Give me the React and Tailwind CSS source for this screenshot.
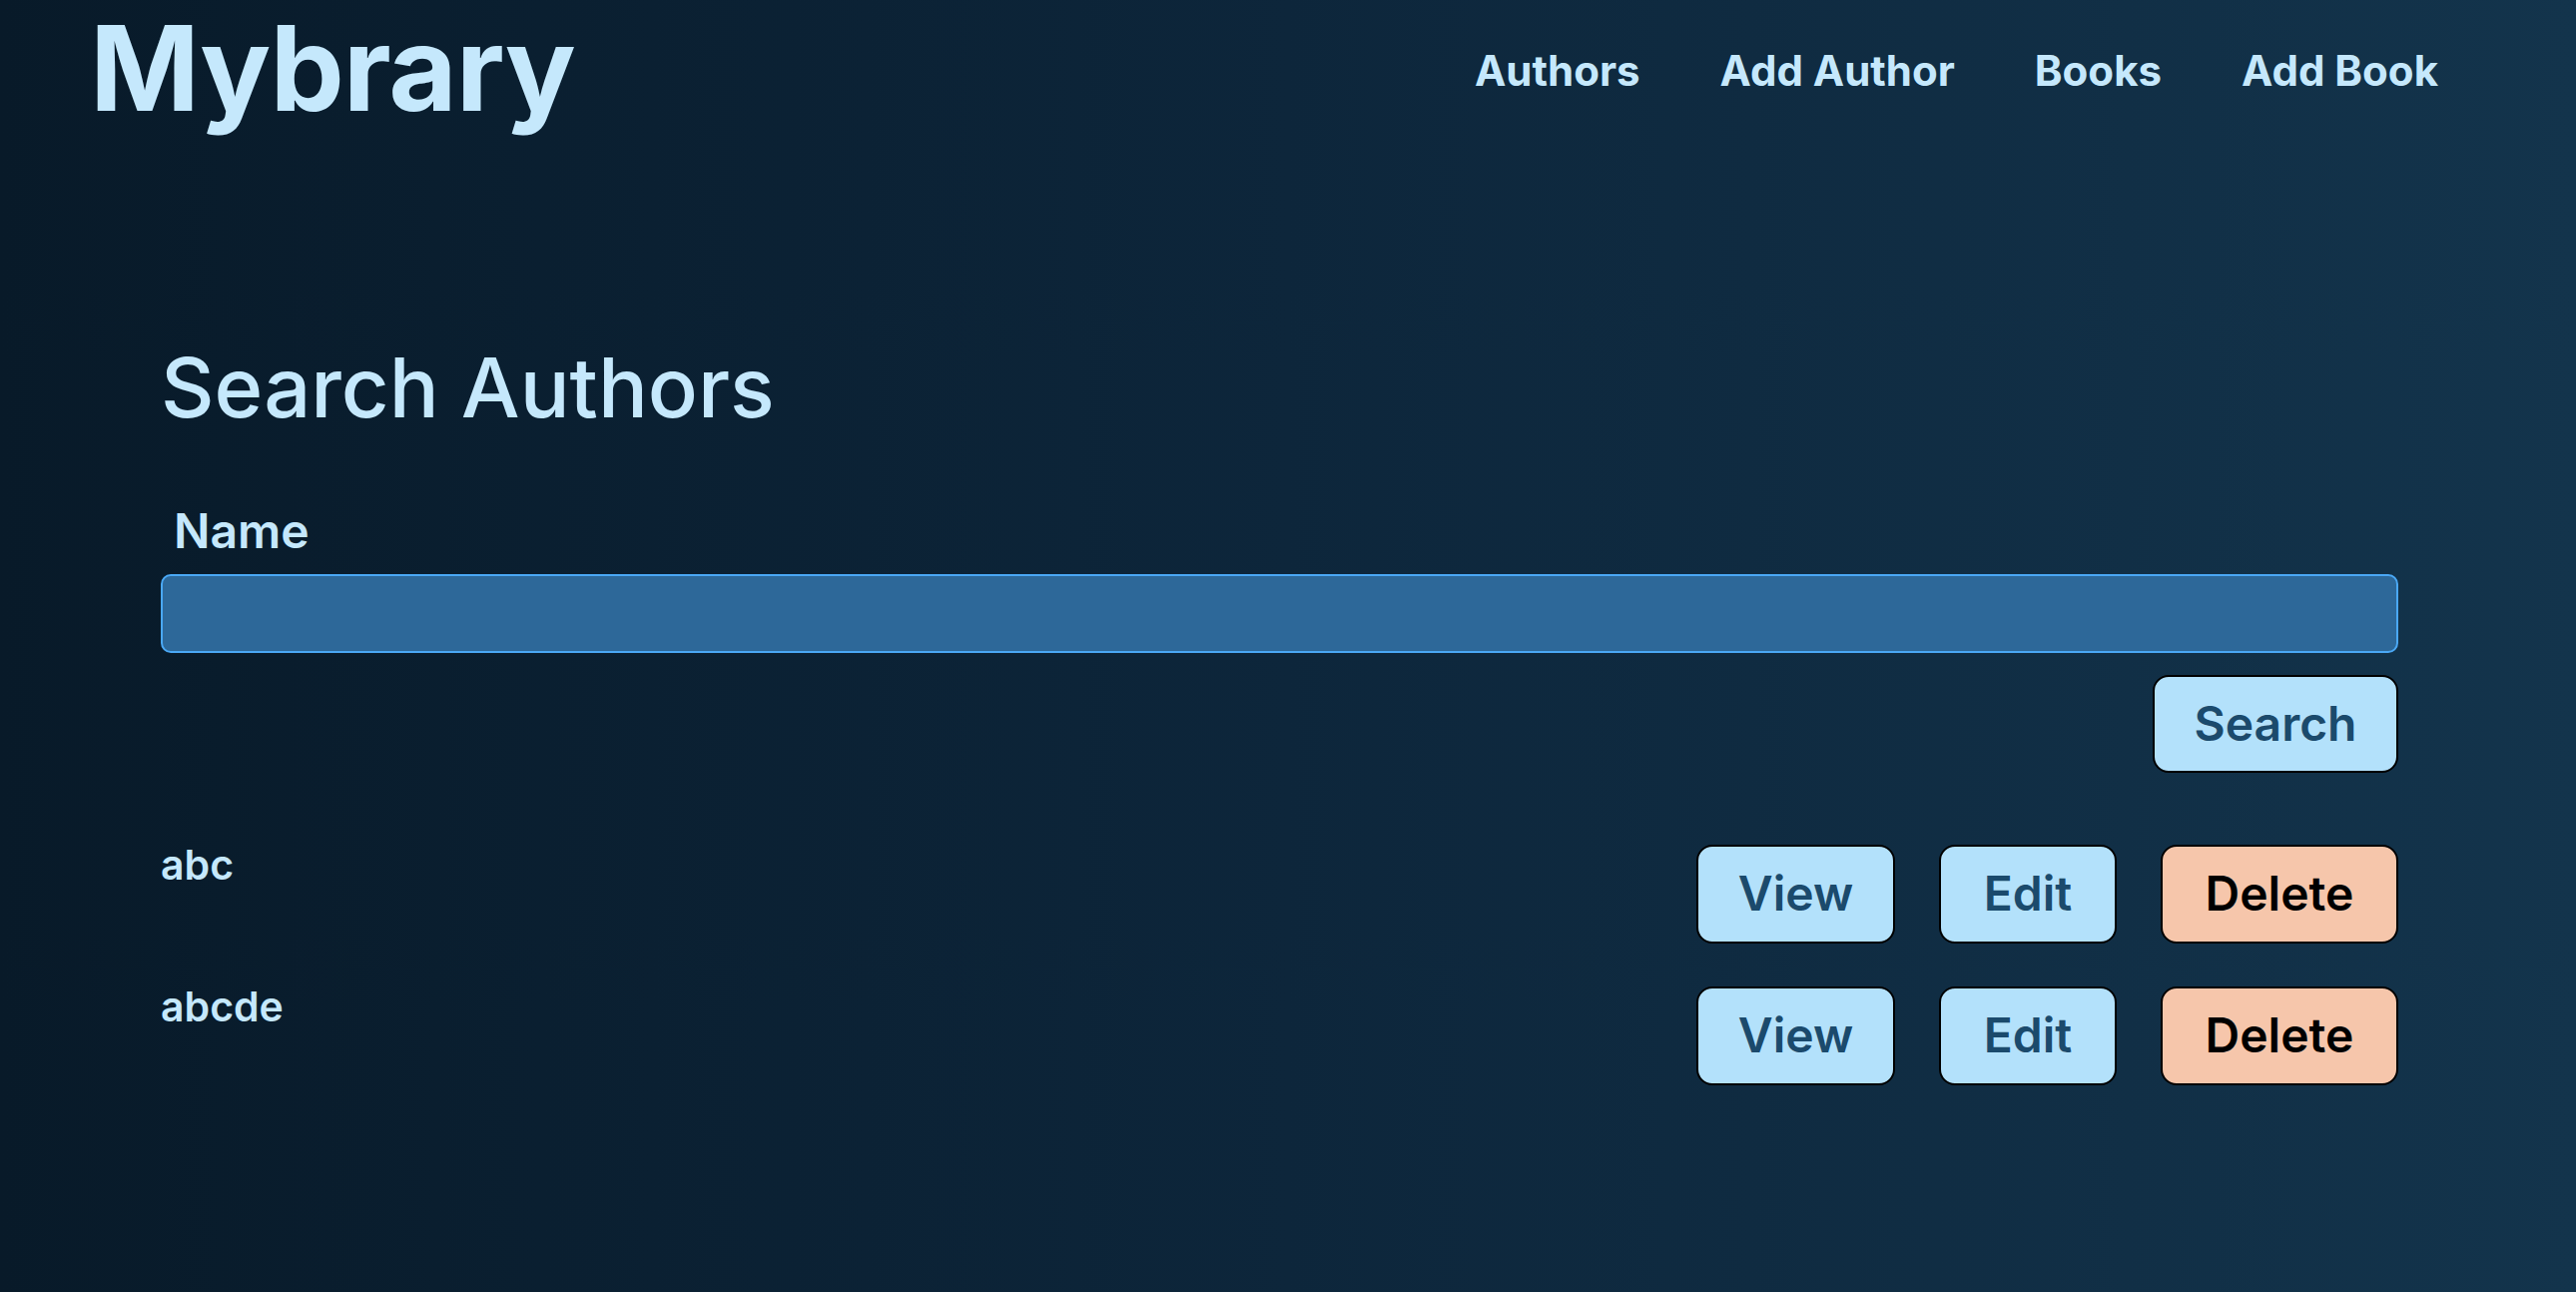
import React, { useState } from 'react';

const authors = [
  { id: 1, name: 'abc' },
  { id: 2, name: 'abcde' },
];

const navLinks = ['Authors', 'Add Author', 'Books', 'Add Book'];

const App = () => {
  const [query, setQuery] = useState('');

  return (
    <div className="min-h-screen w-full bg-linear-to-r from-[#081a29] via-[#0d263b] to-[#13344c] font-['Inter','Noto_Sans',sans-serif] text-[#c5e8fc]">
      {/* header */}
      <header className="flex items-start justify-between pl-[90px] pr-[138px]">
        <a href="#" className="pt-[4px] text-[118px] font-bold leading-[1.1] tracking-[-1px]">
          Mybrary
        </a>
        <nav className="flex gap-[80px] pt-[50px] text-[42px] font-bold leading-none">
          {navLinks.map((link) => (
            <a key={link} href="#" className="hover:underline">
              {link}
            </a>
          ))}
        </nav>
      </header>

      <main className="pl-[161px] pr-[178px]">
        <h2 className="mt-[213px] text-[83px] font-medium leading-none">Search Authors</h2>

        <form onSubmit={(e) => e.preventDefault()} className="flex flex-col">
          <label htmlFor="name" className="mt-[78px] pl-[13px] text-[48px] font-semibold leading-none">
            Name
          </label>
          <input
            id="name"
            name="name"
            type="text"
            value={query}
            onChange={(e) => setQuery(e.target.value)}
            className="mt-[19px] h-[79px] w-full rounded-[10px] border-2 border-[#4aa8f5] bg-[#2d6899] px-4 text-[40px] text-[#c5e8fc] outline-none"
          />
          <div className="mt-[22px] flex justify-end">
            <button
              type="submit"
              className="h-[98px] w-[246px] rounded-[16px] border-2 border-black bg-[#b3e1fb] text-[48px] font-semibold leading-none text-[#1b4a6c]"
            >
              Search
            </button>
          </div>
        </form>

        <div className="mt-[72px] flex flex-col gap-[43px]">
          {authors.map((author) => (
            <div key={author.id} className="flex items-start justify-between">
              <div className="text-[41px] font-semibold leading-none">{author.name}</div>
              <div className="flex gap-[44px]">
                <button className="h-[99px] w-[199px] rounded-[16px] border-2 border-black bg-[#b3e1fb] text-[48px] font-semibold leading-none text-[#1b4a6c]">
                  View
                </button>
                <button className="h-[99px] w-[178px] rounded-[16px] border-2 border-black bg-[#b3e1fb] text-[48px] font-semibold leading-none text-[#1b4a6c]">
                  Edit
                </button>
                <button className="h-[99px] w-[238px] rounded-[16px] border-2 border-black bg-[#f6c6ab] text-[48px] font-semibold leading-none text-black">
                  Delete
                </button>
              </div>
            </div>
          ))}
        </div>
      </main>
    </div>
  );
};

export default App;
